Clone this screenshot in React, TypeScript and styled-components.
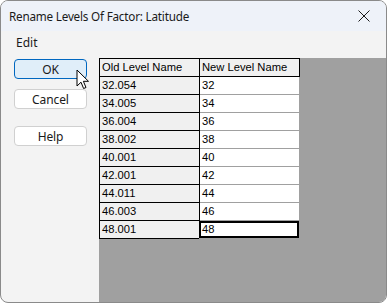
import React from 'react';
import styled, { createGlobalStyle } from 'styled-components';

const GlobalStyle = createGlobalStyle`
  html, body {
    margin: 0;
    padding: 0;
    background: #ffffff;
  }
`;

// --- Styled Components ---
const Window = styled.div`
  position: relative;
  width: 387px;
  height: 303px;
  box-sizing: border-box;
  border: 1px solid #8a8a8a;
  border-radius: 8px;
  overflow: hidden;
  display: flex;
  flex-direction: column;
  background: #f3f3f3;
  font-family: "Noto Sans", "Open Sans", sans-serif;
  font-size: 12px;
  color: #1a1a1a;
`;

const TitleBar = styled.div`
  height: 30px;
  flex: none;
  display: flex;
  align-items: center;
  justify-content: space-between;
  padding: 0 0 0 8px;
  background: #eef2f9;
`;

const Title = styled.span`
  font-size: 11.7px;
  letter-spacing: -0.2px;
  margin-top: -1px;
`;

const CloseButton = styled.div`
  width: 46px;
  height: 30px;
  display: flex;
  align-items: center;
  justify-content: center;
  margin-right: -1px;
`;

const MenuBar = styled.div`
  height: 19px;
  flex: none;
  display: flex;
  align-items: center;
  padding-left: 15px;
  background: #f3f3f3;
`;

const MenuItem = styled.span`
  font-size: 12px;
  margin-top: 4px;
`;

const Body = styled.div`
  flex: 1;
  display: flex;
  min-height: 0;
`;

const ButtonColumn = styled.div`
  width: 98px;
  flex: none;
  display: flex;
  flex-direction: column;
  align-items: flex-start;
  padding: 9px 0 0 13px;
  box-sizing: border-box;
`;

const DialogButton = styled.div<{ $primary?: boolean; $gap?: number }>`
  width: 73px;
  height: 20px;
  box-sizing: border-box;
  margin-top: ${p => p.$gap ?? 0}px;
  border: 1px solid ${p => (p.$primary ? '#0067c0' : '#d0d0d0')};
  border-radius: 4px;
  background: ${p => (p.$primary ? '#e0eef9' : '#ffffff')};
  display: flex;
  align-items: center;
  justify-content: center;
  font-size: 12px;
  letter-spacing: -0.1px;
  color: #1a1a1a;
`;

const GridPanel = styled.div`
  flex: 1;
  margin-top: 8px;
  background: #a0a0a0;
`;

const Grid = styled.div`
  display: inline-flex;
  flex-direction: column;
  border-top: 1px solid #000;
  border-left: 1px solid #000;
  font-family: "Liberation Sans", Arial, sans-serif;
  font-size: 11.2px;
  color: #000;
`;

const Row = styled.div`
  display: flex;
`;

const Cell = styled.div<{ $kind: 'header' | 'old' | 'new'; $width: number; $focused?: boolean }>`
  width: ${p => p.$width}px;
  height: 17px;
  line-height: 17px;
  box-sizing: content-box;
  white-space: nowrap;
  overflow: hidden;
  background: ${p => (p.$kind === 'new' ? '#ffffff' : '#f0f0f0')};
  border-right: 1px solid ${p => (p.$kind === 'new' ? '#a0a0a0' : '#000')};
  border-bottom: 1px solid ${p => (p.$kind === 'new' ? '#a0a0a0' : '#000')};
  box-shadow: ${p => (p.$focused ? 'inset 0 0 0 2px #000' : 'none')};
  margin-left: ${p => (p.$focused ? '-1px' : '0')};
  padding-left: ${p => (p.$focused ? '3px' : '2px')};
`;

const Cursor = styled.svg`
  position: absolute;
  left: 75px;
  top: 68px;
`;

// --- Data ---
const levels = [
  ['32.054', '32'],
  ['34.005', '34'],
  ['36.004', '36'],
  ['38.002', '38'],
  ['40.001', '40'],
  ['42.001', '42'],
  ['44.011', '44'],
  ['46.003', '46'],
  ['48.001', '48'],
];

function App() {
  return (
    <>
      <GlobalStyle />
      <Window>
        <TitleBar>
          <Title>Rename Levels Of Factor: Latitude</Title>
          <CloseButton>
            <svg width="12" height="12" viewBox="0 0 12 12">
              <path d="M0.5 0.5 L11.5 11.5 M11.5 0.5 L0.5 11.5" stroke="#1a1a1a" strokeWidth="1" />
            </svg>
          </CloseButton>
        </TitleBar>
        <MenuBar>
          <MenuItem>Edit</MenuItem>
        </MenuBar>
        <Body>
          <ButtonColumn>
            <DialogButton $primary>OK</DialogButton>
            <DialogButton $gap={10}>Cancel</DialogButton>
            <DialogButton $gap={17}>Help</DialogButton>
          </ButtonColumn>
          <GridPanel>
            <Grid>
              <Row>
                <Cell $kind="header" $width={97}>Old Level Name</Cell>
                <Cell $kind="header" $width={97}>New Level Name</Cell>
              </Row>
              {levels.map(([oldName, newName], i) => (
                <Row key={oldName}>
                  <Cell $kind="old" $width={97}>{oldName}</Cell>
                  <Cell $kind="new" $width={97} $focused={i === levels.length - 1}>
                    {newName}
                  </Cell>
                </Row>
              ))}
            </Grid>
          </GridPanel>
        </Body>
        <Cursor width="14" height="21" viewBox="0 0 14 21">
          <path
            d="M1 1 L1 17 L5 13.2 L7.6 19.5 L10 18.5 L7.4 12.3 L12.5 12.3 Z"
            fill="#ffffff"
            stroke="#000000"
            strokeWidth="1"
            strokeLinejoin="round"
          />
        </Cursor>
      </Window>
    </>
  );
}

export default App;
